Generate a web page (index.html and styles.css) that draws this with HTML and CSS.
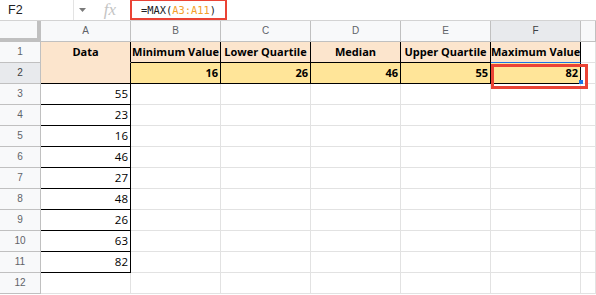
FILE: index.html
```html
<!DOCTYPE html>
<html>
<head>
<meta charset="utf-8">
<link rel="stylesheet" href="styles.css">
</head>
<body>
<div class="fbar">
  <div class="namebox">F2</div>
  <div class="dd"><svg width="7" height="4" viewBox="0 0 7 4"><path d="M0 0h7L3.5 4z" fill="#7a7a7a"/></svg></div>
  <div class="fx">fx</div>
  <div class="formula">=MAX(<span class="ref">A3:A11</span>)</div>
</div>
<div class="grid">
  <div class="corner"></div>
  <div class="ch">A</div><div class="ch">B</div><div class="ch">C</div><div class="ch">D</div><div class="ch">E</div><div class="ch sel">F</div><div class="ch"></div>

  <div class="rh">1</div>
  <div class="c peach a1 bk-r ctr bold">Data</div>
  <div class="c peach bk-r bk-b ctr bold">Minimum Value</div>
  <div class="c peach bk-r bk-b ctr bold">Lower Quartile</div>
  <div class="c peach bk-r bk-b ctr bold">Median</div>
  <div class="c peach bk-r bk-b ctr bold">Upper Quartile</div>
  <div class="c peach bk-r blue-b ctr bold">Maximum Value</div>
  <div class="c"></div>

  <div class="rh sel">2</div>
  <div class="c peach bk-r bk-b"></div>
  <div class="c yellow bk-r bk-b num bold">16</div>
  <div class="c yellow bk-r bk-b num bold">26</div>
  <div class="c yellow bk-r bk-b num bold">46</div>
  <div class="c yellow bk-r bk-b num bold">55</div>
  <div class="c yellow bk-r bk-b num bold f2">82<span class="handle"></span></div>
  <div class="c"></div>

  <div class="rh">3</div><div class="c bk-r bk-b num">55</div><div class="c"></div><div class="c"></div><div class="c"></div><div class="c"></div><div class="c"></div><div class="c"></div>
  <div class="rh">4</div><div class="c bk-r bk-b num">23</div><div class="c"></div><div class="c"></div><div class="c"></div><div class="c"></div><div class="c"></div><div class="c"></div>
  <div class="rh">5</div><div class="c bk-r bk-b num">16</div><div class="c"></div><div class="c"></div><div class="c"></div><div class="c"></div><div class="c"></div><div class="c"></div>
  <div class="rh">6</div><div class="c bk-r bk-b num">46</div><div class="c"></div><div class="c"></div><div class="c"></div><div class="c"></div><div class="c"></div><div class="c"></div>
  <div class="rh">7</div><div class="c bk-r bk-b num">27</div><div class="c"></div><div class="c"></div><div class="c"></div><div class="c"></div><div class="c"></div><div class="c"></div>
  <div class="rh">8</div><div class="c bk-r bk-b num">48</div><div class="c"></div><div class="c"></div><div class="c"></div><div class="c"></div><div class="c"></div><div class="c"></div>
  <div class="rh">9</div><div class="c bk-r bk-b num">26</div><div class="c"></div><div class="c"></div><div class="c"></div><div class="c"></div><div class="c"></div><div class="c"></div>
  <div class="rh">10</div><div class="c bk-r bk-b num">63</div><div class="c"></div><div class="c"></div><div class="c"></div><div class="c"></div><div class="c"></div><div class="c"></div>
  <div class="rh">11</div><div class="c bk-r bk-b num">82</div><div class="c"></div><div class="c"></div><div class="c"></div><div class="c"></div><div class="c"></div><div class="c"></div>
  <div class="rh">12</div><div class="c"></div><div class="c"></div><div class="c"></div><div class="c"></div><div class="c"></div><div class="c"></div><div class="c"></div>
</div>
</body>
</html>
```
FILE: styles.css
```css
* { box-sizing: border-box; }
html, body { margin: 0; padding: 0; background: #fff; }
body { width: 596px; height: 295px; overflow: hidden; font-family: "Open Sans", "Liberation Sans", sans-serif; }

.fbar {
  display: flex;
  align-items: stretch;
  height: 21px;
  border-bottom: 1px solid #d3d3d3;
}
.namebox {
  width: 74px;
  padding-left: 8px;
  font-family: "Liberation Sans", Arial, sans-serif;
  font-size: 12.5px;
  line-height: 20px;
  color: #202124;
  border-right: 1px solid #e3e3e3;
}
.dd {
  width: 16px;
  display: flex;
  align-items: center;
  justify-content: center;
  padding-left: 1px;
}
.fx {
  width: 40px;
  text-align: center;
  font-family: "Liberation Serif", serif;
  font-style: italic;
  font-size: 17px;
  line-height: 19px;
  color: #c4c4c4;
}
.formula {
  width: 97px;
  height: 21px;
  margin-top: -1px;
  border: 2px solid #ea4335;
  padding-left: 9px;
  font-family: "DejaVu Sans Mono", monospace;
  font-size: 10.4px;
  line-height: 18px;
  color: #202124;
}
.ref { color: #f4a02c; }

.grid {
  display: grid;
  grid-template-columns: 41px repeat(6, 90px) 1fr;
  grid-auto-rows: 21px;
}
.corner {
  background: #f8f9fa;
  border-right: 4px solid #c0c0c0;
  border-bottom: 4px solid #c0c0c0;
}
.ch {
  background: #f8f9fa;
  border-right: 1px solid #c0c0c0;
  border-bottom: 1px solid #c0c0c0;
  text-align: center;
  font-family: "Liberation Sans", Arial, sans-serif;
  font-size: 10px;
  line-height: 20px;
  color: #5f6368;
}
.rh {
  background: #f8f9fa;
  border-right: 1px solid #c0c0c0;
  border-bottom: 1px solid #c0c0c0;
  text-align: center;
  font-family: "Liberation Sans", Arial, sans-serif;
  font-size: 10px;
  line-height: 20px;
  color: #5f6368;
}
.ch.sel, .rh.sel { background: #e8eaed; color: #3c4043; }

.c {
  border-right: 1px solid #e2e2e2;
  border-bottom: 1px solid #e2e2e2;
  font-size: 11.5px;
  line-height: 20px;
  color: #000;
  white-space: nowrap;
  overflow: visible;
}
.bold { font-weight: 700; font-size: 11px; }
.peach { background: #fce5cd; }
.yellow { background: #ffe599; }
.a1 { border-bottom-color: #fce5cd; }
.bk-r { border-right-color: #000; }
.bk-b { border-bottom-color: #000; }
.blue-b { border-bottom-color: #1a73e8; }
.ctr { text-align: center; }
.num { text-align: right; padding-right: 2px; }

.f2 { position: relative; }
.f2::after {
  content: "";
  position: absolute;
  left: 0;
  top: 1px;
  width: 91px;
  height: 19px;
  border: 3px solid #ea4335;
  z-index: 2;
}
.handle {
  position: absolute;
  left: 88px;
  top: 17px;
  width: 4px;
  height: 4px;
  background: #1a73e8;
  z-index: 3;
}
```
